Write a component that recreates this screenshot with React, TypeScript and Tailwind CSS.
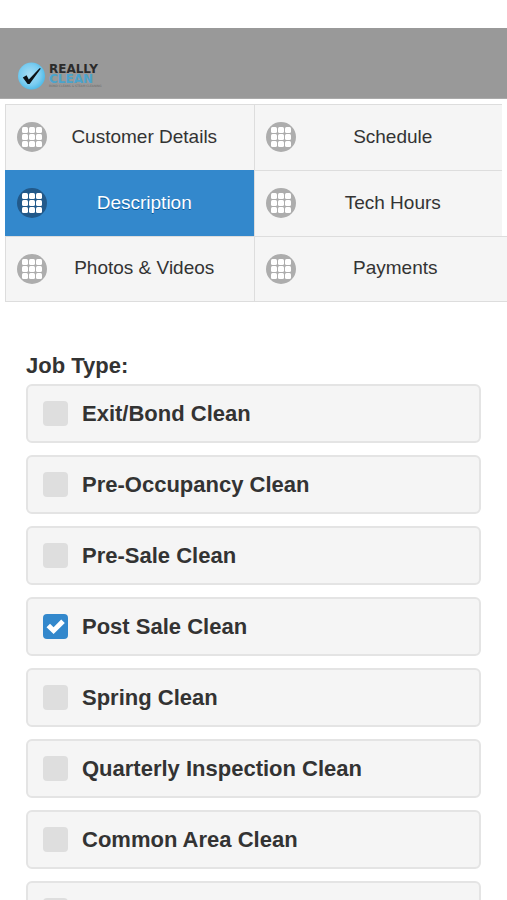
const TABS = [
  'Customer Details', 'Schedule',
  'Description', 'Tech Hours',
  'Photos & Videos', 'Payments',
]

const JOB_TYPES = [
  'Exit/Bond Clean',
  'Pre-Occupancy Clean',
  'Pre-Sale Clean',
  'Post Sale Clean',
  'Spring Clean',
  'Quarterly Inspection Clean',
  'Common Area Clean',
  'Other',
]

function Logo() {
  return (
    <div className="flex items-center gap-[3px]">
      <svg viewBox="0 0 28 28" className="w-7 h-7 shrink-0" aria-hidden="true">
        <defs>
          <radialGradient id="bubble" cx="45%" cy="45%" r="55%">
            <stop offset="0" stopColor="#a9def5" />
            <stop offset="0.7" stopColor="#7accf0" />
            <stop offset="1" stopColor="#52bce9" />
          </radialGradient>
        </defs>
        <circle cx="13.5" cy="14" r="13.5" fill="url(#bubble)" />
        <path d="M4.8 15.5 8.6 13.2l2.2 4.4L21.5 6.2l1.4.4L11.6 22H9.6z" fill="#0d1216" />
      </svg>
      <div className="font-['DejaVu_Sans',sans-serif] text-[12px] leading-[10px] font-bold">
        <div className="text-[#2b2b2b]">REALLY</div>
        <div className="text-[#4aa3cc]">CLEAN</div>
        <div className="text-[3px] leading-[5px] font-normal text-[#6b6b6b]">BOND CLEANS &amp; STEAM CLEANING</div>
      </div>
    </div>
  )
}

function GridIcon({ active }: { active: boolean }) {
  return (
    <svg viewBox="0 0 30 30" className="w-[30px] h-[30px] shrink-0" aria-hidden="true">
      <circle cx="15" cy="15" r="15" fill={active ? '#22598a' : '#adadad'} />
      {[5, 12, 19].map(y => [5, 12, 19].map(x => (
        <rect key={`${x}-${y}`} x={x} y={y} width="6" height="6" rx="1.5" fill="#fff" />
      )))}
    </svg>
  )
}

export default function App() {
  return (
    <div className="h-screen overflow-hidden bg-white pt-7 font-['Liberation_Sans',Arial,sans-serif] text-[#333]">
      <header className="h-[71px] bg-[#999] border-b border-[#aaa] px-[18px] pt-[34px]">
        <Logo />
      </header>

      <nav className="grid grid-cols-2 mx-[5px] mt-[5px]">
        {TABS.map(tab => {
          const active = tab === 'Description'
          return (
            <a
              key={tab}
              href="#"
              className={`flex items-center h-[66px] pl-[11px] pr-3 pb-px border-t border-l text-[19px] last:-mr-[5px] nth-last-[-n+2]:border-b ${
                active
                  ? 'bg-[#3388cc] border-[#3388cc] text-white [text-shadow:0_1px_0_#005599]'
                  : 'bg-[#f5f5f5] border-[#ddd] [text-shadow:0_1px_0_#f3f3f3]'
              }`}
            >
              <GridIcon active={active} />
              <span className="flex-1 text-center">{tab}</span>
            </a>
          )
        })}
      </nav>

      <fieldset className="px-[26px] mt-[50px] text-[22px] font-bold">
        <legend className="float-left w-full leading-7 mb-1">Job Type:</legend>
        <div className="clear-both flex flex-col gap-3">
          {JOB_TYPES.map(job => (
            <label key={job} className="flex items-center gap-[14px] h-[59px] pl-[15px] bg-[#f5f5f5] border-2 border-[#e4e4e4] rounded-md">
              <span className="relative w-[25px] h-[25px] shrink-0">
                <input
                  type="checkbox"
                  defaultChecked={job === 'Post Sale Clean'}
                  className="peer block appearance-none w-full h-full rounded-[4px] bg-[#dedede] checked:bg-[#3388cc]"
                />
                <svg viewBox="0 0 25 25" className="absolute inset-0 hidden peer-checked:block pointer-events-none" aria-hidden="true">
                  <path d="M3.5 13.2 7 9.7l3.6 3.5 7.6-7.8 3.6 3.5L10.6 20z" fill="#fff" />
                </svg>
              </span>
              {job}
            </label>
          ))}
        </div>
      </fieldset>
    </div>
  )
}
